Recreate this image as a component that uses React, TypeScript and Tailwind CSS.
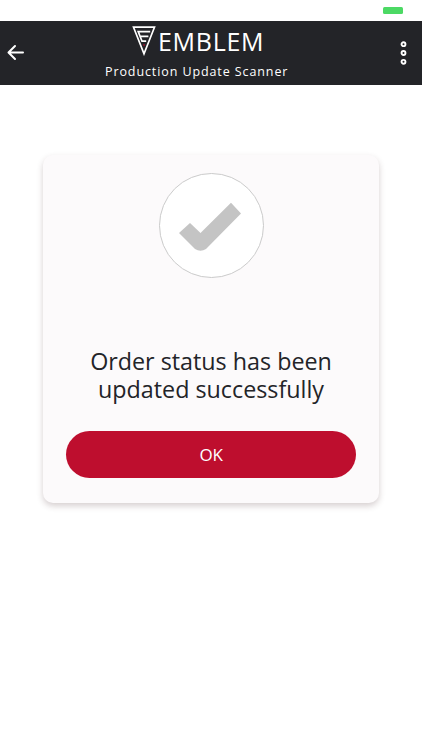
function Logo() {
  return (
    <svg width="24" height="30" viewBox="0 0 24 30" fill="none" stroke="#fff">
      <path d="M1.5 1.2H22.5L12 27.8Z" strokeWidth="1.7" />
      <path d="M18.2 5.6H6.2L10 15.2H14.2M8.2 10.4H16.4" strokeWidth="1.7" />
      <path d="M11.2 19H12.8" stroke="#b01232" strokeWidth="1.6" />
    </svg>
  );
}

function BackButton() {
  return (
    <button aria-label="Back" className="ml-[7px] w-[17px]">
      <svg width="17" height="17" viewBox="0 0 17 17" fill="none" stroke="#fff" strokeWidth="2" strokeLinecap="round" strokeLinejoin="round">
        <path d="M16 8.5H1.7M8 2L1.5 8.5L8 15" />
      </svg>
    </button>
  );
}

function MenuButton() {
  return (
    <button aria-label="Menu" className="mr-[15px]">
      <svg width="7" height="26" viewBox="0 0 7 26" fill="none" stroke="#fff" strokeWidth="1.9">
        <circle cx="3.5" cy="4.2" r="1.95" />
        <circle cx="3.5" cy="13" r="1.95" />
        <circle cx="3.5" cy="21.8" r="1.95" />
      </svg>
    </button>
  );
}

export default function App() {
  return (
    <div className="flex h-[750px] w-[422px] flex-col overflow-hidden bg-white font-['Open_Sans',sans-serif]">
      <div className="flex h-[20.5px] shrink-0 justify-end pt-[6.5px] pr-[19px]">
        <div className="h-[7.5px] w-[20px] rounded-[1.5px] bg-[#4cd964]" />
      </div>
      <header className="flex h-16 shrink-0 items-center bg-[#232428] text-white">
        <BackButton />
        <div className="ml-[81px] flex h-full w-[200px] flex-col">
          <div className="flex h-[41.5px] items-center gap-[2px] pl-[27px]">
            <Logo />
            <span className="text-[25px] leading-[30px] tracking-[0.7px]">EMBLEM</span>
          </div>
          <p className="text-[12.5px] leading-[20px] tracking-[0.9px] whitespace-nowrap">Production Update Scanner</p>
        </div>
        <div className="flex-1" />
        <MenuButton />
      </header>
      <main className="px-[43px] pt-[70.5px]">
        <section className="flex h-[348px] flex-col items-center rounded-[10px] bg-[#fcfafb] px-[23px] pt-[18px] shadow-[0_3px_6px_rgba(70,35,40,0.22)]">
          <div className="size-[105px] shrink-0 rounded-full border border-[#cbcbcb] bg-white">
            <svg width="103" height="103" viewBox="160 174.5 103 103" fill="#c4c4c4">
              <path d="M179 233.5L190 223.5L200.5 233.5L231 203.2L241 214L206 249.5Q200.5 253 195 249.5Z" />
            </svg>
          </div>
          <div className="mt-[69px] flex flex-col items-center text-[23.3px] leading-[28px] whitespace-nowrap text-[#232428]">
            <span>Order status has been</span>
            <span>updated successfully</span>
          </div>
          <button className="mt-[28px] h-[47px] w-full rounded-full bg-[#be0e2e] text-[17px] tracking-[-0.4px] text-white">OK</button>
        </section>
      </main>
    </div>
  );
}
